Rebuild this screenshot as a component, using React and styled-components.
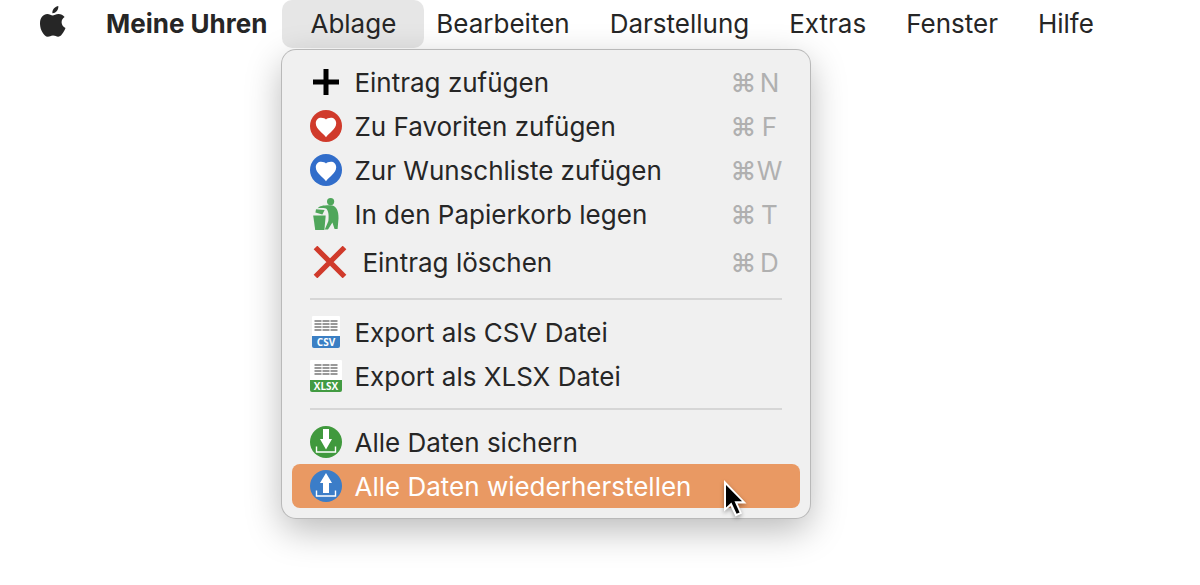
import React from 'react';
import styled, { createGlobalStyle } from 'styled-components';

const GlobalStyle = createGlobalStyle`
  * {
    box-sizing: border-box;
  }
  body {
    margin: 0;
    min-height: 100vh;
    background: #fff;
    color: #262626;
    font-family: Inter, 'Liberation Sans', sans-serif;
  }
  button {
    font: inherit;
    color: inherit;
    background: none;
    border: 0;
    padding: 0;
    cursor: default;
  }
`;

const MenuBar = styled.nav`
  display: flex;
  height: 48px;
  padding-left: 20px;
  font-size: 26px;
  line-height: 48px;
`;

const MenuBarItem = styled.div`
  position: relative;
  margin: 0 -8px 0 0;

  &:first-child {
    margin-left: -8px;
  }
`;

const AppNameItem = styled(MenuBarItem)`
  margin-right: -5px;
`;

const MenuBarButton = styled.button`
  display: block;
  height: 48px;
  padding: 0 28px;
  margin-right: -8px;
  border-radius: 10px;
  font-weight: ${props => (props.$bold ? 700 : 400)};
  background: ${props => (props.$open ? '#e6e6e6' : 'transparent')};
  white-space: nowrap;
`;

const AppleIcon = styled.svg`
  display: block;
  width: 26px;
  height: 32px;
  margin-bottom: 4px;
`;

const Menu = styled.div`
  position: absolute;
  z-index: 1;
  top: 50px;
  left: 0;
  min-width: 528px;
  padding: 10px;
  border-radius: 14px;
  background: #f0f0f0;
  box-shadow: 0 0 0 1px #b9b9b9, 0 12px 36px rgba(0, 0, 0, .28);
`;

const MenuRow = styled.button`
  position: relative;
  display: flex;
  align-items: center;
  width: 100%;
  height: ${props => (props.$tall ? 52 : 44)}px;
  padding: 0 18px;
  border-radius: 8px;
  line-height: 42px;
  text-align: left;
  color: ${props => (props.$active ? '#fff' : 'inherit')};
  background: ${props => (props.$active ? '#e99963' : 'transparent')};
`;

const RowIcon = styled.svg`
  flex: none;
  width: ${props => (props.$wide ? 40 : 32)}px;
  height: 32px;
  margin-right: 12px;
`;

const RowLabel = styled.span`
  flex: 1;
  padding-top: 2px;
  white-space: nowrap;
`;

const Shortcut = styled.kbd`
  display: flex;
  align-items: center;
  padding-top: 2px;
  font: inherit;
  color: #b0b0b0;
`;

const ShortcutKey = styled.span`
  width: 26px;
  text-align: center;
`;

const CommandKey = styled.span`
  width: 26px;
  font-weight: 500;
  text-align: center;
`;

const Separator = styled.hr`
  height: 2px;
  margin: 10px 18px;
  border: 0;
  background: #d6d6d6;
`;

const Pointer = styled.svg`
  position: absolute;
  top: 15px;
  right: 50px;
  width: 28px;
  height: 42px;
  filter: drop-shadow(0 2px 2px rgba(0, 0, 0, .35));
`;

const HeartIcon = ({ color }) => (
  <RowIcon viewBox="0 0 32 32" aria-hidden="true">
    <circle cx="16" cy="16" r="16" fill={color} />
    <path d="M16 27.200C13.500 23.200 5.800 19.600 5.800 13.300C5.800 9.700 8.300 7.700 11 7.700C13.500 7.700 15.200 8.400 16 9.600C16.800 8.400 18.500 7.700 21 7.700C23.700 7.700 26.200 9.700 26.200 13.300C26.200 19.600 18.500 23.200 16 27.200Z" fill="#fff" />
  </RowIcon>
);

const PlusIcon = () => (
  <RowIcon viewBox="0 0 32 32" aria-hidden="true">
    <path d="M13.500 3h5v10.500h10.500v5h-10.500v10.500h-5v-10.500h-10.500v-5h10.500z" fill="#000" />
  </RowIcon>
);

const TrashIcon = () => (
  <RowIcon viewBox="0 0 32 32" aria-hidden="true">
    <g fill="#4fa65b">
      <circle cx="20.600" cy="3.600" r="3.600" />
      <path d="M3.200 17.500H15.700L14.400 32H5.200Z" />
      <path d="M6 11.200L14.600 12L12.400 16.600L5.400 14.400Z" />
      <path d="M7.600 10.200C9.800 8 13 7.200 20.500 7.300C26.300 7.500 28.800 13 28.500 20.500L27.600 31H24.600L22.400 24.500L18 31.500H14.800L18.400 23C19 17 18.500 12.500 16 10.600C13 9.800 10 10 7.600 10.200Z" />
    </g>
  </RowIcon>
);

const CrossIcon = () => (
  <RowIcon $wide viewBox="0 0 40 32" aria-hidden="true">
    <path d="M5.500 1.500L34.500 30.500M34.500 1.500L5.500 30.500" stroke="#d03a2b" strokeWidth="5.200" fill="none" />
  </RowIcon>
);

const SheetIcon = ({ color, type, inset }) => (
  <RowIcon viewBox="0 0 32 32" aria-hidden="true">
    <rect x={inset} y="0" width={32 - inset * 2} height="24" rx="1" fill="#fff" />
    {[5, 8, 11, 14].map(y => (
      <path key={y} d={`M4.500 ${y}h7m1 0h7m1 0h7`} stroke="#999" strokeWidth="2" />
    ))}
    <path d={`M${inset} 20H${32 - inset}V30Q${32 - inset} 32 ${30 - inset} 32H${inset + 2}Q${inset} 32 ${inset} 30Z`} fill={color} />
    <text x="16" y="29.500" textAnchor="middle" fontFamily="'Open Sans', sans-serif" fontWeight="700" fontSize="10" fill="#fff">{type}</text>
  </RowIcon>
);

const TransferIcon = ({ color, up }) => (
  <RowIcon viewBox="0 0 32 32" aria-hidden="true">
    <circle cx="16" cy="16" r="16" fill={color} />
    <path
      d={up ? 'M16 3L22 13H19V23H13V13H10Z' : 'M13 3H19V13H22L16 23.500L10 13H13Z'}
      fill="#fff"
    />
    <path d="M6.500 20.500V26H25.500V20.500" fill="none" stroke="#fff" strokeWidth="1.400" />
  </RowIcon>
);

const MenuEntry = ({ icon, label, shortcut, tall, active, children }) => (
  <MenuRow type="button" role="menuitem" $tall={tall} $active={active}>
    {icon}
    <RowLabel>{label}</RowLabel>
    {shortcut && (
      <Shortcut>
        <CommandKey>⌘</CommandKey>
        <ShortcutKey>{shortcut}</ShortcutKey>
      </Shortcut>
    )}
    {children}
  </MenuRow>
);

const FileMenu = () => (
  <Menu role="menu" aria-label="Ablage">
    <MenuEntry icon={<PlusIcon />} label="Eintrag zufügen" shortcut="N" />
    <MenuEntry icon={<HeartIcon color="#d03a2b" />} label="Zu Favoriten zufügen" shortcut="F" />
    <MenuEntry icon={<HeartIcon color="#316dca" />} label="Zur Wunschliste zufügen" shortcut="W" />
    <MenuEntry icon={<TrashIcon />} label="In den Papierkorb legen" shortcut="T" />
    <MenuEntry icon={<CrossIcon />} label="Eintrag löschen" shortcut="D" tall />
    <Separator />
    <MenuEntry icon={<SheetIcon color="#3b7fc4" type="CSV" inset={2} />} label="Export als CSV Datei" />
    <MenuEntry icon={<SheetIcon color="#429b42" type="XLSX" inset={0} />} label="Export als XLSX Datei" />
    <Separator />
    <MenuEntry icon={<TransferIcon color="#40993d" />} label="Alle Daten sichern" />
    <MenuEntry icon={<TransferIcon color="#3b7dc8" up />} label="Alle Daten wiederherstellen" active>
      <Pointer viewBox="0 0 28 42" aria-hidden="true">
        <path d="M2 1V32.500L8.500 27L13.500 37.500L20 34.500L15.500 24.500H24.500Z" fill="#fff" />
        <path d="M4 6V28.500L9.400 23.400L14.600 34.800L17.600 33.400L12.500 22.300H20Z" fill="#000" />
      </Pointer>
    </MenuEntry>
  </Menu>
);

const menus = ['Bearbeiten', 'Darstellung', 'Extras', 'Fenster', 'Hilfe'];

const App = () => (
  <>
    <GlobalStyle />
    <MenuBar>
      <MenuBarItem>
        <MenuBarButton type="button" aria-label="Apple">
          <AppleIcon viewBox="0 0 26 32" aria-hidden="true">
            <path d="M18.300 0C18.600 2 17.700 4 16.600 5.300C15.500 6.600 13.900 7.400 12.400 7.300C12.100 5.400 13 3.500 14.100 2.300C15.200 1 17 .1 18.300 0Z" fill="#262626" />
            <path d="M24.600 11.100C22.800 12.200 21.600 14 21.600 16.300C21.600 18.900 23.200 21 25.500 21.900C25 23.500 24.200 25 23.200 26.500C21.800 28.600 20.400 30.700 18.200 30.700C16.100 30.700 15.500 29.500 13 29.500C10.600 29.500 9.700 30.800 7.800 30.800C5.600 30.800 4.100 28.800 2.700 26.700C.9 24-.1 20.400 0 17C.1 11.700 3.400 8 7.300 8C9.500 8 11.300 9.500 12.700 9.500C14.100 9.500 16.100 7.900 18.700 8C20.900 8.100 23.100 9 24.600 11.100Z" fill="#262626" />
          </AppleIcon>
        </MenuBarButton>
      </MenuBarItem>
      <AppNameItem>
        <MenuBarButton type="button" $bold>Meine Uhren</MenuBarButton>
      </AppNameItem>
      <MenuBarItem>
        <MenuBarButton type="button" $open aria-haspopup="menu" aria-expanded="true">Ablage</MenuBarButton>
        <FileMenu />
      </MenuBarItem>
      {menus.map(name => (
        <MenuBarItem key={name}>
          <MenuBarButton type="button">{name}</MenuBarButton>
        </MenuBarItem>
      ))}
    </MenuBar>
  </>
);

export default App;
